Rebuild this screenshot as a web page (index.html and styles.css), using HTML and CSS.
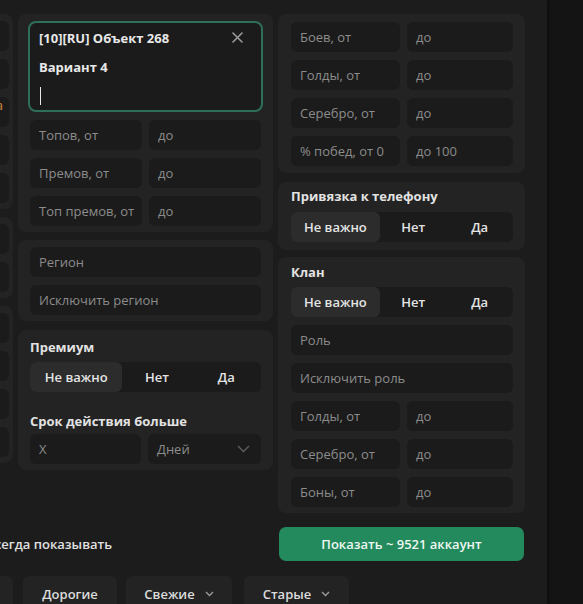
FILE: index.html
```html
<!DOCTYPE html>
<html lang="ru">
<head>
<meta charset="utf-8">
<title>Фильтры</title>
<link rel="stylesheet" href="styles.css">
</head>
<body>
<div class="wrap">
  <div class="cols">
    <div class="col col-left">
      <div class="card card-l">
        <div class="field"></div>
        <div class="field"></div>
        <div class="field field-warn"><span class="warn">Недоступна</span></div>
        <div class="field"></div>
        <div class="field"></div>
      </div>
      <div class="card card-l">
        <div class="field"></div>
        <div class="field"></div>
      </div>
      <div class="card card-l">
        <div class="field"></div>
        <div class="field"></div>
        <div class="field"></div>
        <div class="field"></div>
      </div>
    </div>

    <div class="col col-mid">
      <div class="card">
        <div class="multi">
          <div class="multi-row"><span class="tag">[10][RU] Объект 268</span>
            <svg class="x" width="11" height="11" viewBox="0 0 11 11"><path d="M1 1L10 10M10 1L1 10" stroke="#9b9b9b" stroke-width="1.6" fill="none" stroke-linecap="round"/></svg>
          </div>
          <div class="multi-row"><span class="tag">Вариант 4</span></div>
          <div class="multi-row"><span class="caret"></span></div>
        </div>
        <div class="pair"><div class="field">Топов, от</div><div class="field">до</div></div>
        <div class="pair"><div class="field">Премов, от</div><div class="field">до</div></div>
        <div class="pair"><div class="field">Топ премов, от</div><div class="field">до</div></div>
      </div>
      <div class="card">
        <div class="field">Регион</div>
        <div class="field">Исключить регион</div>
      </div>
      <div class="card card-prem">
        <div class="label">Премиум</div>
        <div class="seg"><span class="active">Не важно</span><span>Нет</span><span>Да</span></div>
        <div class="label label-2">Срок действия больше</div>
        <div class="pair">
          <div class="field">X</div>
          <div class="field select"><span>Дней</span>
            <svg width="13" height="8" viewBox="0 0 13 8"><path d="M1 1L6.5 6.5L12 1" stroke="#5e5e5e" stroke-width="1.4" fill="none"/></svg>
          </div>
        </div>
      </div>
    </div>

    <div class="col col-right">
      <div class="card card-r card-stats">
        <div class="pair"><div class="field">Боев, от</div><div class="field">до</div></div>
        <div class="pair"><div class="field">Голды, от</div><div class="field">до</div></div>
        <div class="pair"><div class="field">Серебро, от</div><div class="field">до</div></div>
        <div class="pair"><div class="field">% побед, от 0</div><div class="field">до 100</div></div>
      </div>
      <div class="card card-r card-phone">
        <div class="label">Привязка к телефону</div>
        <div class="seg"><span class="active">Не важно</span><span>Нет</span><span>Да</span></div>
      </div>
      <div class="card card-r card-clan">
        <div class="label">Клан</div>
        <div class="seg"><span class="active">Не важно</span><span>Нет</span><span>Да</span></div>
        <div class="field">Роль</div>
        <div class="field">Исключить роль</div>
        <div class="pair"><div class="field">Голды, от</div><div class="field">до</div></div>
        <div class="pair"><div class="field">Серебро, от</div><div class="field">до</div></div>
        <div class="pair"><div class="field">Боны, от</div><div class="field">до</div></div>
      </div>
    </div>
  </div>

  <div class="actions">
    <div class="always"><span>Всегда показывать</span></div>
    <div class="show-btn">Показать ~ 9521 аккаунт</div>
  </div>

  <div class="tabs">
    <div class="tab tab-first">Дешевые</div>
    <div class="tab tab-exp">Дорогие</div>
    <div class="tab tab-new">Свежие <svg width="9" height="6" viewBox="0 0 9 6"><path d="M1 1L4.5 4.5L8 1" stroke="#9a9a9a" stroke-width="1.4" fill="none"/></svg></div>
    <div class="tab tab-old">Старые <svg width="9" height="6" viewBox="0 0 9 6"><path d="M1 1L4.5 4.5L8 1" stroke="#9a9a9a" stroke-width="1.4" fill="none"/></svg></div>
  </div>
</div>
</body>
</html>
```

FILE: styles.css
```css
* { box-sizing: border-box; margin: 0; padding: 0; }
html, body { background: #141414; }
body {
  margin: 0;
  font-family: "Open Sans", "Noto Sans", sans-serif;
  font-size: 13px;
  color: #dcdcdc;
}
.wrap {
  width: 547px;
  height: 604px;
  background: #1c1c1c;
  overflow: hidden;
  box-shadow: 1px 0 3px rgba(0, 0, 0, 0.5);
}
.cols {
  display: flex;
  gap: 5px;
  margin-left: -237px;
  padding-top: 14px;
  align-items: flex-start;
}
.col { display: flex; flex-direction: column; gap: 8px; flex: none; }
.col-left { width: 250px; }
.col-mid { width: 255px; }
.col-right { width: 247px; gap: 0; }

.card {
  background: #232323;
  border-radius: 8px;
  padding: 7px 12px 6px;
  display: flex;
  flex-direction: column;
  gap: 8px;
}
.card-l { padding-right: 4px; }
.card-prem { margin-top: 1px; padding-top: 8px; gap: 6px; }
.card-prem .label-2 { margin-top: 14px; margin-bottom: -2px; }

.card-r { padding-left: 13px; padding-right: 12px; }
.card-stats { padding-top: 8px; padding-bottom: 7px; }
.card-phone { margin-top: 9px; padding-top: 5px; padding-bottom: 8px; gap: 7px; }
.card-clan { margin-top: 7px; padding-top: 6px; padding-bottom: 6px; }
.card-clan .label { margin-bottom: -2px; }

.field {
  height: 30px;
  background: #1b1b1b;
  border-radius: 6px;
  padding: 0 9px;
  display: flex;
  align-items: center;
  color: #8c8c8c;
  white-space: nowrap;
  overflow: hidden;
}
.field-warn { justify-content: flex-end; align-items: flex-start; padding-right: 6px; }
.warn { color: #d08a3a; line-height: 16px; }
.pair { display: flex; gap: 7px; }
.pair .field { flex: 1 1 0; }
.card-r .pair .field:first-child { flex: 0 0 109px; }

.select { justify-content: space-between; padding-right: 11px; }

.label {
  font-weight: 700;
  line-height: 18px;
  color: #e2e2e2;
}

.seg {
  display: flex;
  height: 30px;
  background: #1b1b1b;
  border-radius: 6px;
}
.seg span {
  flex: 0 0 30%;
  display: flex;
  align-items: center;
  justify-content: center;
  font-weight: 600;
  color: #e4e4e4;
  border-radius: 6px;
}
.seg span.active { flex-basis: 40%; background: #2c2c2c; }

.multi {
  height: 91px;
  margin: 0 -2px;
  border: 2px solid #2e6f57;
  border-radius: 8px;
  background: #1b1b1b;
  padding: 0 18px 0 9px;
}
.multi-row {
  height: 29px;
  display: flex;
  align-items: center;
  justify-content: space-between;
}
.tag { font-weight: 700; color: #e8e8e8; }
.caret { width: 1px; height: 18px; background: #e8e8e8; margin-left: 1px; }

.actions {
  display: flex;
  align-items: center;
  margin-top: 14px;
  height: 34px;
}
.always {
  width: 112px;
  flex: none;
  display: flex;
  justify-content: flex-end;
  white-space: nowrap;
  font-weight: 600;
  color: #e0e0e0;
}
.show-btn {
  margin-left: 167px;
  width: 245px;
  height: 34px;
  border-radius: 7px;
  background: #228a5c;
  color: #eef7f2;
  font-weight: 600;
  display: flex;
  align-items: center;
  justify-content: center;
}

.tabs {
  display: flex;
  gap: 10px;
  margin-top: 15px;
  margin-left: -87px;
}
.tab {
  height: 36px;
  background: #232323;
  border-radius: 6px;
  display: flex;
  align-items: center;
  justify-content: center;
  gap: 10px;
  font-weight: 600;
  color: #dcdcdc;
  white-space: nowrap;
  flex: none;
}
.tab-first { width: 100px; }
.tab-exp { width: 94px; }
.tab-new { width: 106px; margin-left: -1px; }
.tab-old { width: 105px; margin-left: 2px; }
```
